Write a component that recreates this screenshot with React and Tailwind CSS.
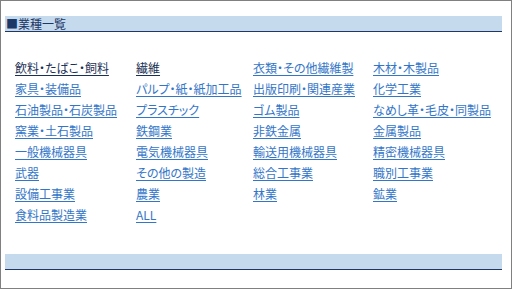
import React from "react";

const rows = [
  ["飲料・たばこ・飼料", "繊維", "衣類・その他繊維製", "木材・木製品"],
  ["家具・装備品", "パルプ・紙・紙加工品", "出版印刷・関連産業", "化学工業"],
  ["石油製品・石炭製品", "プラスチック", "ゴム製品", "なめし革・毛皮・同製品"],
  ["窯業・土石製品", "鉄鋼業", "非鉄金属", "金属製品"],
  ["一般機械器具", "電気機械器具", "輸送用機械器具", "精密機械器具"],
  ["武器", "その他の製造", "総合工事業", "職別工事業"],
  ["設備工事業", "農業", "林業", "鉱業"],
  ["食料品製造業", "ALL", "", ""],
];

// visited links render darker
const visited = ["飲料・たばこ・飼料", "繊維"];

const App = () => {
  return (
    <div className="w-[513px] h-[289px] bg-white">
      <div
        className="w-[512px] h-[289px] border border-[#808080] px-[4px] pt-[15px] text-[12px]"
        style={{ fontFamily: '"Noto Sans CJK JP", "Noto Sans", sans-serif', fontFeatureSettings: '"palt"' }}
      >
        <div className="w-[497px] h-[16px] bg-[#c6daee] border-b border-[#1f3864] pl-[1px] leading-[15px] text-[#1c3866]">
          ■業種一覧
        </div>

        <div className="mt-[25px] pl-[10px] grid grid-cols-[121px_117px_120px_1fr] leading-[21px]">
          {rows.map((row, i) =>
            row.map((item, j) => (
              <div key={`${i}-${j}`} className="h-[21px] whitespace-nowrap">
                {item && (
                  <a
                    href="#"
                    className={`underline underline-offset-[2px] ${visited.includes(item) ? "text-[#1a2f55]" : "text-[#3376c8]"}`}
                  >
                    {item}
                  </a>
                )}
              </div>
            ))
          )}
        </div>

        <div className="mt-[29px] w-[497px] h-[16px] bg-[#c6daee] border-b border-[#1f3864]" />
      </div>
    </div>
  );
};

export default App;
